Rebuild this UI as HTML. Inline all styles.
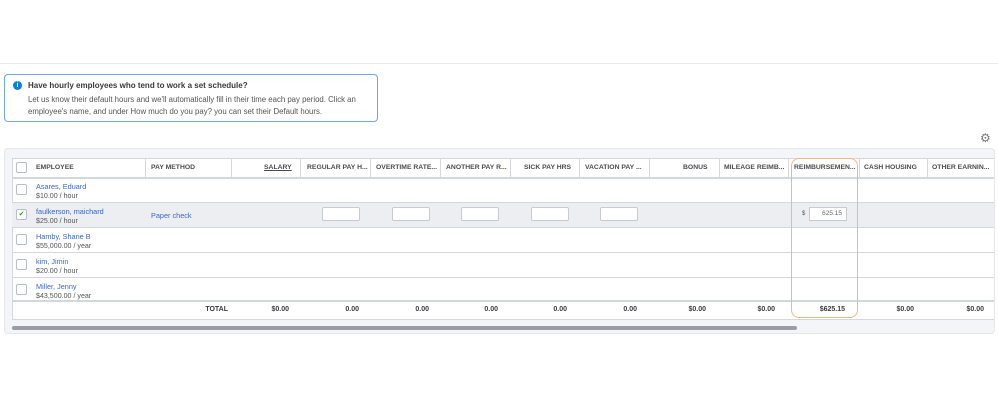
<!DOCTYPE html>
<html><head><style>
*{margin:0;padding:0;box-sizing:border-box}
body{width:998px;height:409px;background:#fff;font-family:"Liberation Sans",sans-serif;position:relative;overflow:hidden;color:#393a3d}
.a{position:absolute}
.hd{font-size:6.8px;font-weight:bold;color:#4a4b4f;top:158px;height:19px;line-height:19px;white-space:nowrap}
.vl{position:absolute;top:158px;width:1px;height:19px;background:#d4d7dc}
.hl{position:absolute;left:12px;width:982px;height:1px;background:#d4d7dc}
.cb{position:absolute;left:16px;width:11px;height:11px;border:1px solid #babec5;background:#fff;border-radius:2px}
.nm{position:absolute;left:36px;font-size:7.3px;color:#3a67c9}
.sb{position:absolute;left:36px;font-size:7.1px;color:#555}
.in{position:absolute;top:207px;width:38px;height:14px;border:1px solid #c7cad0;background:#fff;border-radius:2px}
.tt{position:absolute;top:306px;font-size:7px;font-weight:bold;color:#393a3d;text-align:right}
</style></head><body>
<div class="a" style="left:0;top:63px;width:998px;height:1px;background:#e8e9ec"></div>
<div class="a" style="left:4px;top:74px;width:374px;height:48px;border:1px solid #6ea7ea;border-radius:4px"></div>
<div class="a" style="left:13px;top:81px;width:9px;height:9px;border-radius:50%;background:#0a7ee0;color:#fff;font-size:7px;font-weight:bold;text-align:center;line-height:9px">i</div>
<div class="a" style="left:28px;top:81px;font-size:8px;font-weight:bold;color:#393a3d">Have hourly employees who tend to work a set schedule?</div>
<div class="a" style="left:28px;top:94px;width:345px;font-size:7.8px;line-height:12px;color:#555">Let us know their default hours and we'll automatically fill in their time each pay period. Click an employee's name, and under How much do you pay? you can set their Default hours.</div>
<div class="a" style="left:980px;top:131px;font-size:12px;color:#777">⚙</div>
<div class="a" style="left:4px;top:148px;width:991px;height:186px;background:#f4f5f8;border:1px solid #e6e7ea;border-radius:4px"></div>
<div class="a" style="left:12px;top:158px;width:982px;height:162px;background:#fff;border:1px solid #d4d7dc;border-right:none"></div>
<div class="a" style="left:12px;top:202px;width:982px;height:25px;background:#eceef1"></div>
<div class="hl" style="top:177px;height:2px"></div>
<div class="hl" style="top:202px"></div><div class="hl" style="top:227px"></div>
<div class="hl" style="top:252px"></div><div class="hl" style="top:277px"></div>
<div class="hl" style="top:300px;height:2px"></div>
<div class="vl" style="left:145px"></div><div class="vl" style="left:231px"></div><div class="vl" style="left:300px"></div><div class="vl" style="left:370px"></div><div class="vl" style="left:440px"></div><div class="vl" style="left:510px"></div><div class="vl" style="left:579px"></div><div class="vl" style="left:649px"></div><div class="vl" style="left:719px"></div><div class="vl" style="left:788px"></div><div class="vl" style="left:859px"></div><div class="vl" style="left:927px"></div>
<div class="cb" style="top:162px"></div>
<div class="a hd" style="left:36px">EMPLOYEE</div>
<div class="a hd" style="left:151px">PAY METHOD</div>
<div class="a hd" style="left:264px;text-decoration:underline">SALARY</div>
<div class="a hd" style="left:307px">REGULAR PAY H...</div>
<div class="a hd" style="left:376px">OVERTIME RATE...</div>
<div class="a hd" style="left:446px">ANOTHER PAY R...</div>
<div class="a hd" style="left:524px">SICK PAY HRS</div>
<div class="a hd" style="left:585px">VACATION PAY ...</div>
<div class="a hd" style="left:683px">BONUS</div>
<div class="a hd" style="left:724px">MILEAGE REIMB...</div>
<div class="a hd" style="left:794px">REIMBURSEMEN...</div>
<div class="a hd" style="left:864px">CASH HOUSING</div>
<div class="a hd" style="left:932px">OTHER EARNIN...</div>
<div class="cb" style="top:184px"></div><div class="nm" style="top:182px">Asares, Eduard</div><div class="sb" style="top:192px">$10.00 / hour</div>
<div class="cb" style="top:209px;color:#2ca01c;font-size:7px;line-height:9px;text-align:center">✔</div><div class="nm" style="top:207px">faulkerson, maichard</div><div class="sb" style="top:217px">$25.00 / hour</div>
<div class="a" style="left:151px;top:211px;font-size:7.3px;color:#3a67c9">Paper check</div>
<div class="in" style="left:322px"></div><div class="in" style="left:392px"></div><div class="in" style="left:461px"></div><div class="in" style="left:531px"></div><div class="in" style="left:600px"></div>
<div class="a" style="left:802px;top:211px;font-size:6px;color:#555">$</div>
<div class="a" style="left:809px;top:207px;width:38px;height:14px;border:1px solid #c7cad0;background:#fff;font-size:6.5px;color:#666;text-align:right;padding-right:4px;line-height:12px">625.15</div>
<div class="cb" style="top:234px"></div><div class="nm" style="top:232px">Hamby, Shane B</div><div class="sb" style="top:242px">$55,000.00 / year</div>
<div class="cb" style="top:259px"></div><div class="nm" style="top:257px">kim, Jimin</div><div class="sb" style="top:267px">$20.00 / hour</div>
<div class="cb" style="top:284px"></div><div class="nm" style="top:282px">Miller, Jenny</div><div class="sb" style="top:292px">$43,500.00 / year</div>
<div class="tt" style="left:190px;width:38px">TOTAL</div>
<div class="tt" style="left:250px;width:39px">$0.00</div>
<div class="tt" style="left:320px;width:39px">0.00</div>
<div class="tt" style="left:390px;width:39px">0.00</div>
<div class="tt" style="left:459px;width:39px">0.00</div>
<div class="tt" style="left:528px;width:39px">0.00</div>
<div class="tt" style="left:598px;width:39px">0.00</div>
<div class="tt" style="left:667px;width:39px">$0.00</div>
<div class="tt" style="left:736px;width:39px">$0.00</div>
<div class="tt" style="left:800px;width:45px">$625.15</div>
<div class="tt" style="left:875px;width:39px">$0.00</div>
<div class="tt" style="left:945px;width:39px">$0.00</div>
<div class="a" style="left:791px;top:158px;width:67px;height:160px;border:1.5px solid #f7b680;border-radius:8px"></div>
<div class="a" style="left:12px;top:326px;width:785px;height:4px;background:#9a9da3;border-radius:2px"></div>
</body></html>
